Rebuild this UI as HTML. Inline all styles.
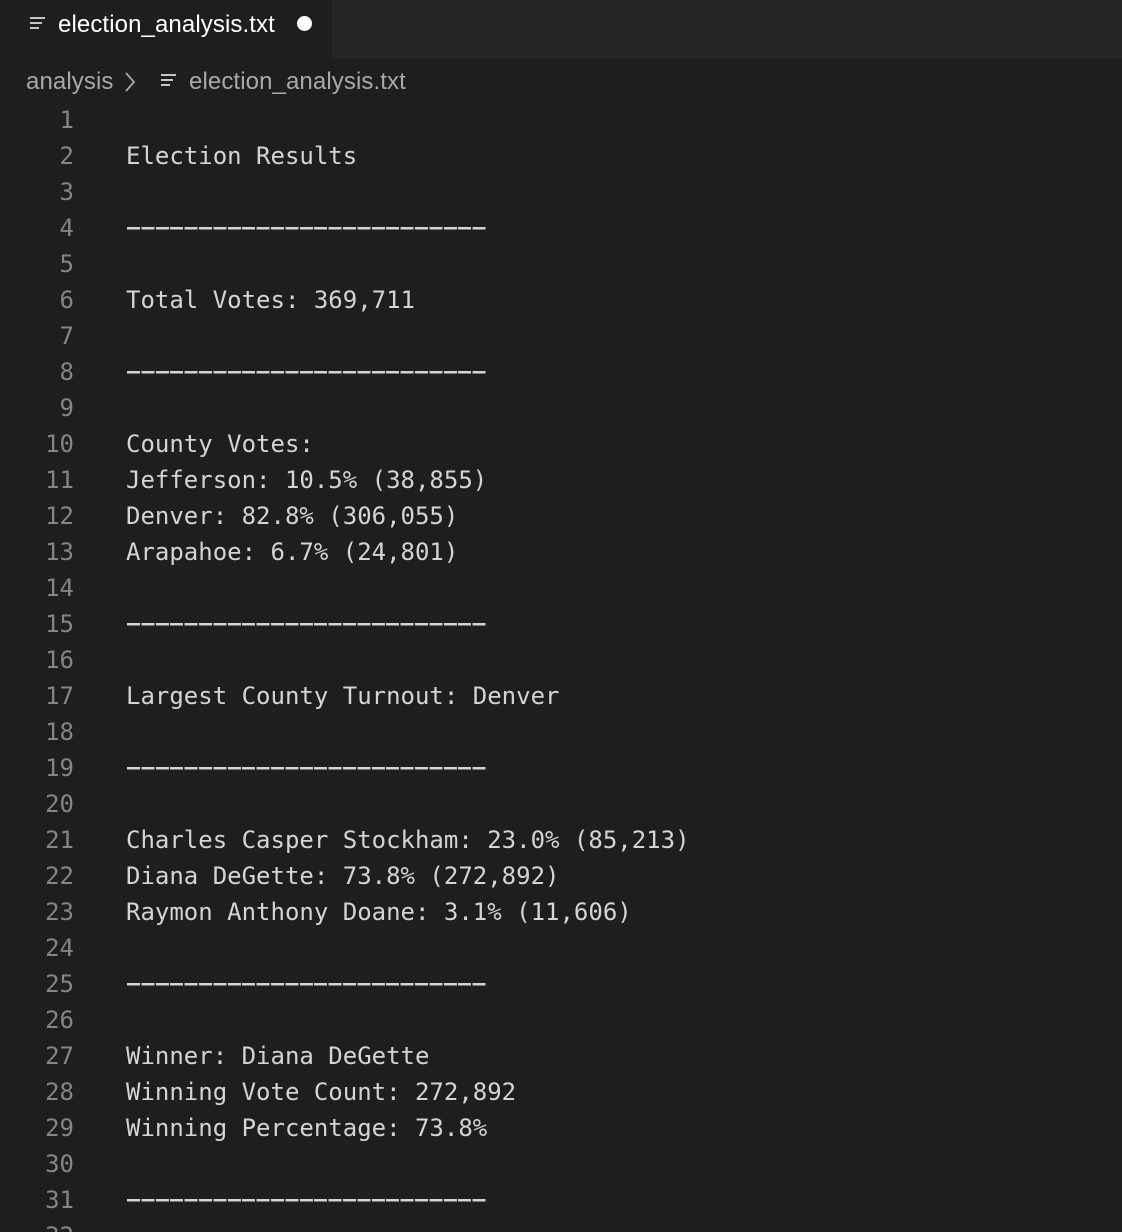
<!DOCTYPE html>
<html><head><meta charset="utf-8"><style>
html,body{margin:0;padding:0;background:#1e1e1e;width:1122px;height:1232px;overflow:hidden}
.tabbar{position:absolute;left:0;top:0;width:1122px;height:58px;background:#1e1e1e}
.tabrest{position:absolute;left:332px;top:0;right:0;height:58px;background:#252526}
.tab{position:absolute;left:0;top:0;width:330px;height:58px;background:#1e1e1e}
.ui{font-family:"Liberation Sans",sans-serif;position:absolute;white-space:nowrap}
.code{position:absolute;left:0;top:102px;width:1122px;height:1130px;overflow:hidden;font-family:"DejaVu Sans Mono","Liberation Mono",monospace;font-size:24px;line-height:36px}
.ln{position:absolute;width:74px;text-align:right;color:#858585}
.tx{position:absolute;left:126px;color:#d4d4d4;white-space:pre}
.dash{color:transparent;background:repeating-linear-gradient(90deg,#d4d4d4 0,#d4d4d4 13px,transparent 13px,transparent 14.4px) no-repeat 1px 17px/359px 2.5px}
</style></head><body>
<div class="tabbar"></div><div class="tabrest"></div><div class="tab"></div>
<svg style="position:absolute;left:29px;top:15px" width="18" height="18" viewBox="0 0 18 18"><g stroke="#c5c5c5" stroke-width="2"><line x1="1" y1="3" x2="16" y2="3"/><line x1="1" y1="8" x2="13" y2="8"/><line x1="1" y1="13" x2="10" y2="13"/></g></svg>
<div class="ui" style="left:58px;top:11px;font-size:24px;color:#ffffff;letter-spacing:0.1px">election_analysis.txt</div>
<div style="position:absolute;left:297px;top:16px;width:15px;height:15px;border-radius:50%;background:#fff"></div>
<div class="ui" style="left:26px;top:68px;font-size:24px;color:#a9a9a9;letter-spacing:0.1px">analysis</div>
<svg style="position:absolute;left:123px;top:71px" width="14" height="22" viewBox="0 0 14 22"><polyline points="3,2 11,11 3,20" fill="none" stroke="#a9a9a9" stroke-width="1.8"/></svg>
<svg style="position:absolute;left:160px;top:72px" width="18" height="18" viewBox="0 0 18 18"><g stroke="#c5c5c5" stroke-width="2"><line x1="1" y1="3" x2="16" y2="3"/><line x1="1" y1="8" x2="13" y2="8"/><line x1="1" y1="13" x2="10" y2="13"/></g></svg>
<div class="ui" style="left:189px;top:68px;font-size:24px;color:#a9a9a9;letter-spacing:0.1px">election_analysis.txt</div>
<div class="code" id="c"></div>
<script>
var L=["","Election Results","","-------------------------","","Total Votes: 369,711","","-------------------------","","County Votes:","Jefferson: 10.5% (38,855)","Denver: 82.8% (306,055)","Arapahoe: 6.7% (24,801)","","-------------------------","","Largest County Turnout: Denver","","-------------------------","","Charles Casper Stockham: 23.0% (85,213)","Diana DeGette: 73.8% (272,892)","Raymon Anthony Doane: 3.1% (11,606)","","-------------------------","","Winner: Diana DeGette","Winning Vote Count: 272,892","Winning Percentage: 73.8%","","-------------------------",""];
var h="";for(var i=0;i<L.length;i++){var t=i*36;var d=L[i].charAt(0)=="-"?" dash":"";h+='<div class="ln" style="top:'+t+'px">'+(i+1)+'</div><div class="tx'+d+'" style="top:'+t+'px">'+L[i]+'</div>';}
document.getElementById("c").innerHTML=h;
</script>
</body></html>
